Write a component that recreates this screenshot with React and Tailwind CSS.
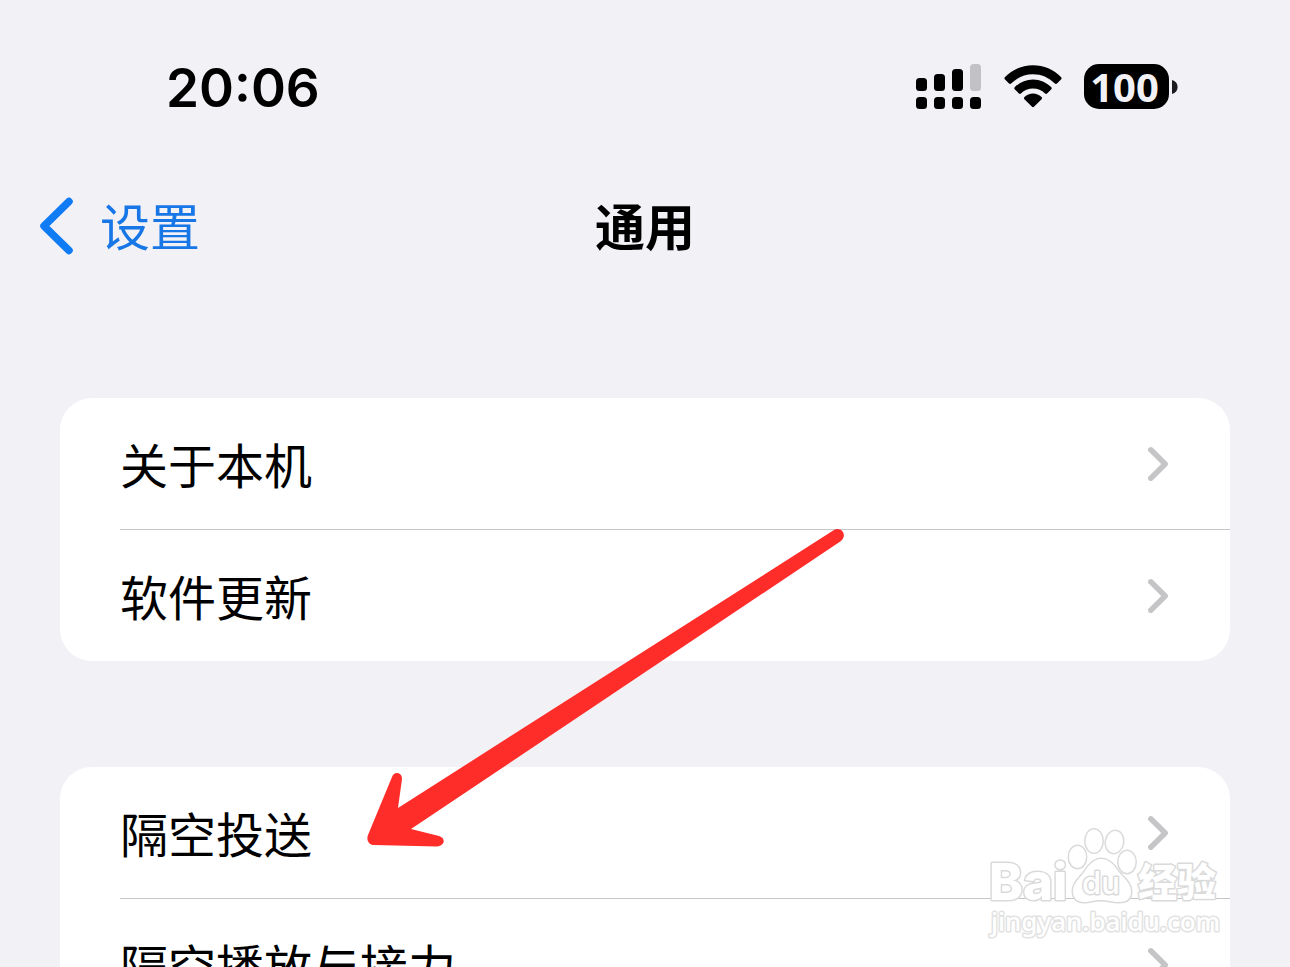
import React from "react";

const sections = [
  { id: "device", items: ["关于本机", "软件更新"] },
  { id: "sharing", items: ["隔空投送", "隔空播放与接力"] },
];

function SignalIcon() {
  return (
    <svg width="66" height="46" viewBox="0 0 66 46" aria-hidden="true">
      <rect x="0" y="14" width="11" height="13" rx="3.5" />
      <rect x="18" y="10" width="11" height="17" rx="3.5" />
      <rect x="36" y="5" width="11" height="22" rx="3.5" />
      <rect x="54" y="0" width="11" height="27" rx="3.5" fill="#c1c1c6" />
      <rect x="0" y="33" width="11" height="12" rx="3.5" />
      <rect x="18" y="33" width="11" height="12" rx="3.5" />
      <rect x="36" y="33" width="11" height="12" rx="3.5" />
      <rect x="54" y="33" width="11" height="12" rx="3.5" />
    </svg>
  );
}

function WifiIcon() {
  return (
    <svg width="58" height="46" viewBox="0 0 58 46" aria-hidden="true">
      <path d="M.8 13.2C8.4 5.4 18.2 1.2 29 1.2s20.600 4.200 28.200 12c.5.600.5 1.400 0 2l-4.200 4.300c-.6.600-1.500.600-2.100 0C44.700 13.400 37.300 10.200 29 10.200S13.300 13.400 7.100 19.500c-.6.600-1.500.600-2.100 0L.8 15.200c-.5-.6-.5-1.400 0-2z" />
      <path d="M10.700 23.200C15.700 18.200 22 15.400 29 15.400s13.300 2.800 18.300 7.800c.6.600.6 1.500 0 2.100l-4.200 4.200c-.6.600-1.400.600-2 0-3.300-3.100-7.500-4.900-12.100-4.900s-8.800 1.800-12.100 4.900c-.6.600-1.400.600-2 0l-4.200-4.200c-.6-.6-.6-1.500 0-2.100z" />
      <path d="M20.500 33.100c2.300-2.200 5.300-3.500 8.500-3.500s6.200 1.300 8.500 3.500c.7.600.7 1.500.1 2.100L30 42.700c-.6.600-1.400.600-2 0l-7.600-7.500c-.6-.6-.6-1.500.1-2.100z" />
    </svg>
  );
}

function Battery() {
  return (
    <div className="flex items-center gap-[3px]">
      <div className="flex h-[45px] w-[85px] items-center justify-center rounded-[15px] bg-black pr-1 font-['Open_Sans',sans-serif] text-[40px] leading-none font-bold text-[#f2f2f6]">
        100
      </div>
      <svg width="6" height="14" viewBox="0 0 6 14" aria-hidden="true">
        <path d="M0 0C3.500 1 5.600 3.600 5.600 7S3.500 13 0 14z" fill="#1c1c1e" />
      </svg>
    </div>
  );
}

function Chevron() {
  return (
    <svg width="22" height="36" viewBox="0 0 22 36" fill="none" aria-hidden="true">
      <path d="M2.800 3.800L17.200 18L2.800 32.200" stroke="#c5c5c7" strokeWidth="5.500" strokeLinecap="round" strokeLinejoin="round" />
    </svg>
  );
}

function Arrow() {
  return (
    <svg className="pointer-events-none absolute top-[528px] left-[366px]" width="480" height="320" viewBox="366 528 480 320" aria-hidden="true">
      <path
        d="M834 530C841 526 848 535 841 541L411 829L439 836C446 838 445 846 437 846.500L374 845C369 845 366 840 368 835L392 777C394 771 402 772 402 779L398 808Z"
        fill="#ff2d2a"
      />
    </svg>
  );
}

function Watermark() {
  return (
    <svg
      className="pointer-events-none absolute right-[66px] bottom-[25px] [paint-order:stroke]"
      width="240"
      height="118"
      viewBox="984 824 240 118"
      fill="#ffffff"
      stroke="#dadada"
      strokeWidth="3"
      strokeLinejoin="round"
    >
      <text x="989" y="900" className="font-['Inter',sans-serif] text-[51px] font-extrabold">Bai</text>
      <ellipse cx="1077.500" cy="857" rx="8.500" ry="11" />
      <ellipse cx="1094" cy="841" rx="8.500" ry="11.500" />
      <ellipse cx="1114.500" cy="842" rx="8.500" ry="11" transform="rotate(10 1114.500 842)" />
      <ellipse cx="1127" cy="862" rx="8.500" ry="11" />
      <path d="M1101 859C1109 859 1114 865 1118 871C1123 878 1131 882 1131 892C1131 899 1126 902 1119 902C1112 902 1108 900 1101 900C1094 900 1090 902 1084 902C1077 902 1073 898 1073 891C1073 883 1080 878 1085 871C1089 865 1094 859 1101 859Z" />
      <text x="1082" y="894" className="font-['Inter',sans-serif] text-[31px] font-medium">du</text>
      <text x="1138" y="896" className="font-['Noto_Sans_CJK_SC',sans-serif] text-[39px] font-black">经验</text>
      <text x="991" y="931" stroke="#e2e2e2" className="font-['Noto_Sans',sans-serif] text-[26px] font-medium">jingyan.baidu.com</text>
    </svg>
  );
}

export default function App() {
  return (
    <div className="relative h-screen overflow-hidden bg-[#f2f1f6] font-['Noto_Sans_CJK_SC',sans-serif] text-black">
      {/* Status bar */}
      <div className="flex items-start justify-between pt-[60px] pr-28 pl-[166px]">
        <time className="font-['Inter',sans-serif] text-[53px] leading-[56px] font-semibold">20:06</time>
        <div className="flex items-start gap-[22px] pt-1">
          <SignalIcon />
          <WifiIcon />
          <Battery />
        </div>
      </div>

      {/* Navigation */}
      <header className="mt-[72px] grid grid-cols-3 items-center px-[38px]">
        <button type="button" className="flex items-center gap-[26px] justify-self-start text-[50px] leading-[76px] text-[#1877e6]">
          <svg width="36" height="58" viewBox="0 0 36 58" fill="none" aria-hidden="true">
            <path d="M31 4.500L6 29L31 53.500" stroke="#0f7bf5" strokeWidth="7.500" strokeLinecap="round" strokeLinejoin="round" />
          </svg>
          <span className="pb-1 leading-[72px]">设置</span>
        </button>
        <h1 className="pb-1 text-center text-[50px] leading-[72px] font-bold">通用</h1>
      </header>

      {/* Settings groups */}
      <main className="mt-[134px] flex flex-col gap-[106px] px-[60px]">
        {sections.map((section) => (
          <ul key={section.id} className="overflow-hidden rounded-[32px] bg-white pl-[60px]">
            {section.items.map((item) => (
              <li key={item} className="border-b border-[#c6c6c8] last:border-b-0">
                <button type="button" className="flex h-[131px] w-full items-center justify-between pr-[60px] text-left text-[48px] leading-[72px]">
                  <span className="pb-0.5">{item}</span>
                  <Chevron />
                </button>
              </li>
            ))}
          </ul>
        ))}
      </main>

      <Arrow />
      <Watermark />
    </div>
  );
}
